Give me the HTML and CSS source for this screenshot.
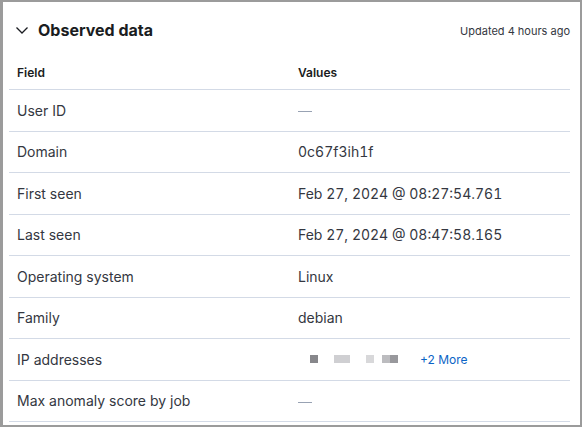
FILE: index.html
```html
<!DOCTYPE html>
<html>
<head>
<meta charset="utf-8">
<link rel="stylesheet" href="styles.css">
</head>
<body>
<div class="frame">
  <div class="panel">
    <div class="head">
      <div class="title">
        <svg class="chev" width="14" height="14" viewBox="0 0 14 14"><path d="M1.5 4.5 L7 10 L12.5 4.5" fill="none" stroke="#1a1c21" stroke-width="1.3"/></svg>
        <span>Observed data</span>
      </div>
      <div class="updated">Updated 4 hours ago</div>
    </div>
    <div class="table">
      <div class="row th"><div class="c">Field</div><div class="c">Values</div></div>
      <div class="row"><div class="c">User ID</div><div class="c v"><span class="dash"></span></div></div>
      <div class="row"><div class="c">Domain</div><div class="c v">0c67f3ih1f</div></div>
      <div class="row"><div class="c">First seen</div><div class="c v">Feb 27, 2024 @ 08:27:54.761</div></div>
      <div class="row"><div class="c">Last seen</div><div class="c v">Feb 27, 2024 @ 08:47:58.165</div></div>
      <div class="row"><div class="c">Operating system</div><div class="c v">Linux</div></div>
      <div class="row"><div class="c">Family</div><div class="c v">debian</div></div>
      <div class="row"><div class="c">IP addresses</div><div class="c ips">
        <span class="px p1"></span><span class="gap16"></span><span class="px p2"></span><span class="px p2"></span><span class="gap16"></span><span class="px p3"></span><span class="gap8"></span><span class="px p4"></span><span class="px p5"></span>
        <a class="more">+2 More</a>
      </div></div>
      <div class="row"><div class="c">Max anomaly score by job</div><div class="c v"><span class="dash"></span></div></div>
    </div>
  </div>
</div>
</body>
</html>
```
FILE: styles.css
```css
html, body { margin: 0; padding: 0; }
body { font-family: Inter, "Noto Sans", sans-serif; color: #343741; background: #fff; }
.frame { width: 582px; height: 427px; box-sizing: border-box; border: 2px solid #9b9b9b; border-left-width: 3px; background: #fff; overflow: hidden; }
.panel { padding: 0 10px 0 6px; }
.head { height: 53px; display: flex; align-items: center; justify-content: space-between; }
.title { display: flex; align-items: center; gap: 9px; font-size: 16px; font-weight: 700; color: #1a1c21; padding-left: 6px; margin-top: 3px; }
.chev { display: block; }
.updated { font-size: 11px; color: #343741; margin-top: 4px; }
.row { display: grid; grid-template-columns: 281px 1fr; height: 41.5px; box-sizing: border-box; border-bottom: 1px solid #d3dae6; align-items: center; font-size: 14px; }
.row.th { height: 35px; font-size: 12px; font-weight: 600; color: #1a1c21; padding-top: 1px; }
.c { padding-left: 8px; }
.v { font-feature-settings: "tnum" 1; font-variant-numeric: tabular-nums; }
.dash { display: inline-block; width: 14px; height: 1px; background: #98a2b3; vertical-align: middle; }
.ips { display: flex; align-items: center; padding-left: 20px; }
.px { display: inline-block; width: 8px; height: 8px; }
.p1 { background: #87878b; }
.p2 { background: #cfcfd2; }
.p3 { background: #d8d8da; }
.p4 { background: #bcbcbf; }
.p5 { background: #98989c; }
.gap16 { width: 16px; }
.gap8 { width: 8px; }
.more { color: #0b64c6; font-size: 12px; margin-left: 22px; }
```
